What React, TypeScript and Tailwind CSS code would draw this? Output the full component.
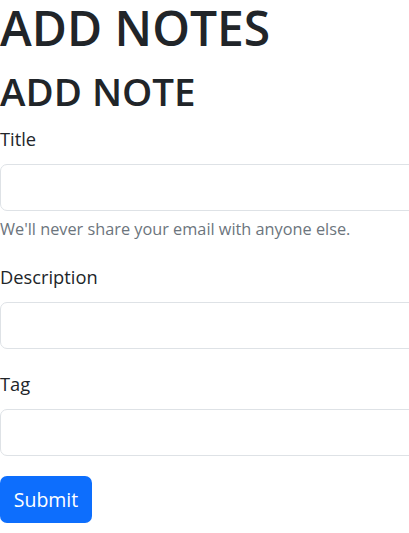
const font = { fontFamily: '"Open Sans", "Noto Sans", sans-serif' };

const Field = ({ label, hint }: { label: string; hint?: string }) => (
  <div className="mb-[20px]">
    <label className="block mb-[10px] text-[18.3px] leading-[30px] text-[#212529]">{label}</label>
    <input
      type="text"
      className="block w-full h-[47px] px-[15px] rounded-[7px] border border-[#dee2e6] bg-white outline-none"
    />
    {hint && (
      <div className="mt-[5px] text-[16.3px] leading-[26px] text-[#6c757d]">{hint}</div>
    )}
  </div>
);

export default function App() {
  return (
    <div className="w-[409px] h-[533px] overflow-hidden bg-white" style={font}>
      <div className="w-[440px]">
        <h1 className="mb-[10px] text-[48px] leading-[55px] font-semibold text-[#212529]">ADD NOTES</h1>
        <h2 className="mb-[6px] text-[38.5px] leading-[53px] font-semibold text-[#212529]">ADD NOTE</h2>
        <form>
          <Field label="Title" hint="We'll never share your email with anyone else." />
          <Field label="Description" />
          <Field label="Tag" />
          <button
            type="button"
            className="h-[47px] w-[92px] rounded-[7px] bg-[#0d6efd] text-white text-[19.5px]"
          >
            Submit
          </button>
        </form>
      </div>
    </div>
  );
}
